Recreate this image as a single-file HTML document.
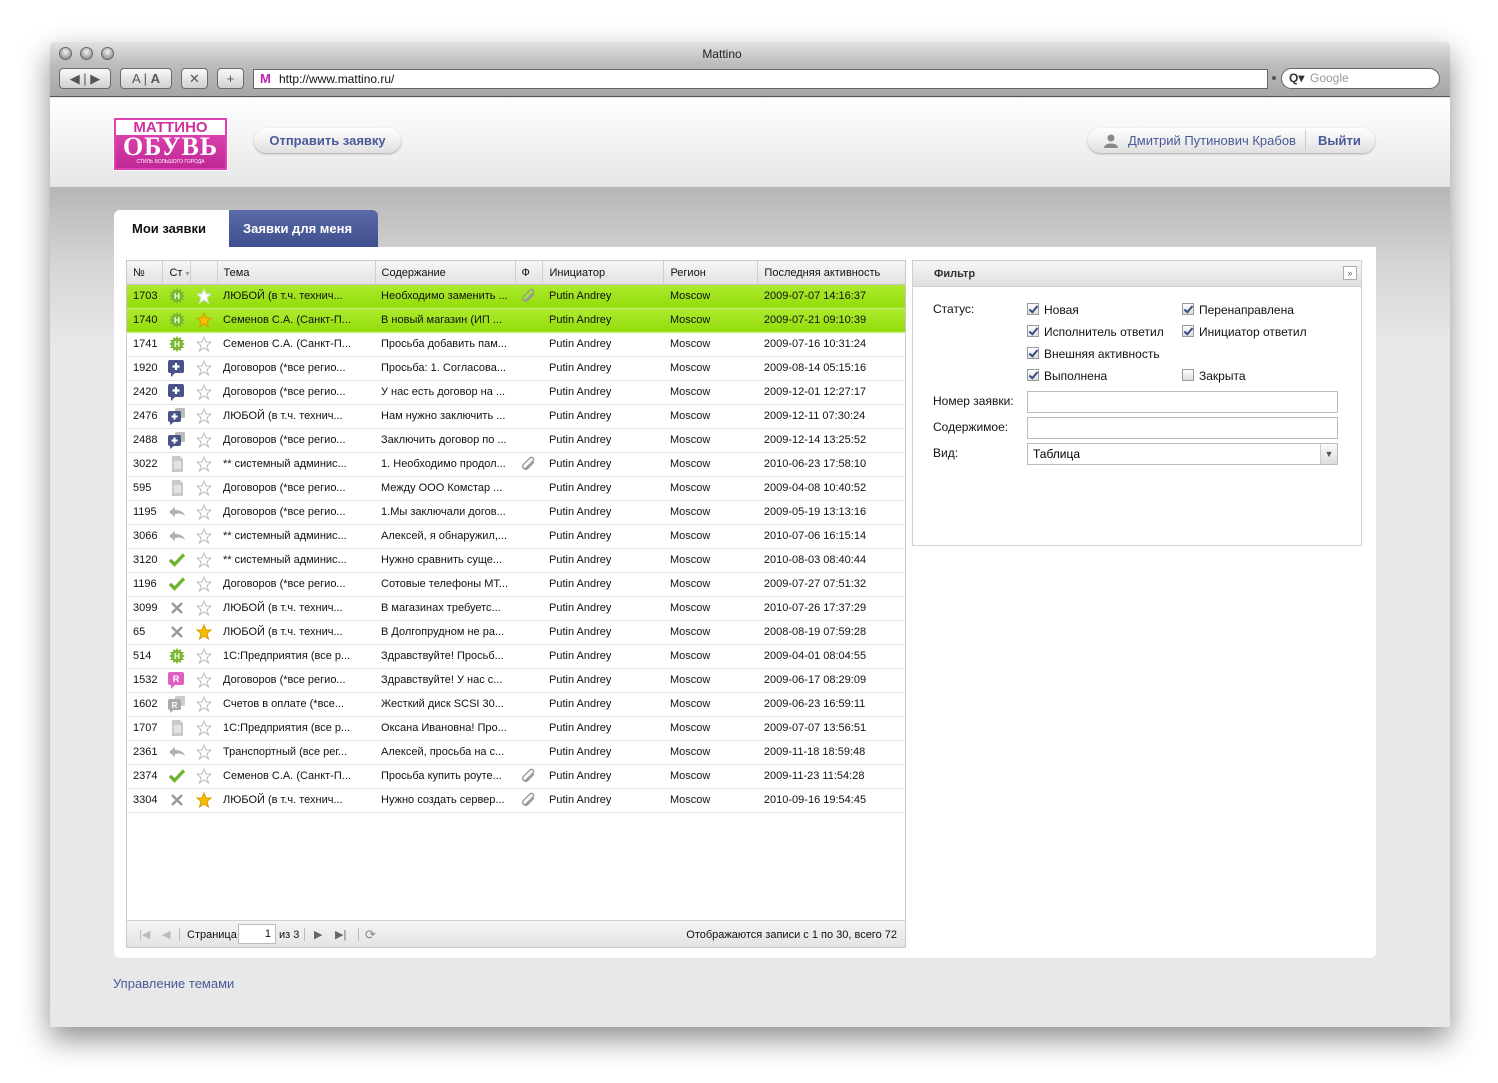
<!DOCTYPE html>
<html><head><meta charset="utf-8">
<style>
*{box-sizing:border-box;margin:0;padding:0}
body{width:1498px;height:1083px;background:#fff;font-family:"Liberation Sans",sans-serif;position:relative;overflow:hidden}
.win{position:absolute;left:50px;top:42px;width:1400px;height:985px;background:#e8e8e8;box-shadow:0 12px 30px rgba(0,0,0,.45);border-radius:5px 5px 0 0;overflow:hidden}
.title{position:absolute;left:0;top:0;width:1400px;height:55px;background:linear-gradient(#e2e2e2,#bdbdbd 40%,#a6a6a6);border-bottom:1px solid #555}
.title .t{position:absolute;left:650px;width:44px;top:5px;text-align:center;font-size:12px;color:#222}
.dot{position:absolute;top:5px;width:13px;height:13px;border-radius:50%;background:radial-gradient(circle at 50% 35%,#f4f4f4,#9a9a9a 70%,#777);border:1px solid #666}
.btn{position:absolute;top:26px;height:21px;border:1px solid #6a6a6a;border-radius:4px;background:linear-gradient(#fafafa,#d0d0d0);font-size:13px;color:#555;text-align:center;line-height:19px}
.url{position:absolute;left:203px;top:27px;width:1015px;height:20px;background:#fff;border:1px solid #666;font-size:12px;line-height:18px;padding-left:25px;color:#111}
.url b{position:absolute;left:6px;top:0;color:#c020b0;font-size:13px}
.search{position:absolute;left:1231px;top:26px;width:159px;height:21px;background:#fff;border:1px solid #666;border-radius:11px;font-size:12px;color:#999;line-height:19px;padding-left:28px}
.header{position:absolute;left:0;top:56px;width:1400px;height:89px;background:linear-gradient(#fff,#e6e6e6)}
.logo{position:absolute;left:64px;top:20px;width:113px;height:52px;background:linear-gradient(#e54cb7,#c02896);border:2px solid #e040b0;outline:1px solid #fff;color:#fff;text-align:center;overflow:hidden}
.logo .a{background:#fff;color:#d0309f;font-weight:bold;font-size:15px;line-height:15px;height:15px;letter-spacing:0}
.logo .b{font-family:"Liberation Serif",serif;font-weight:bold;font-size:26px;line-height:24px;letter-spacing:1px}
.logo .c{font-size:5px;line-height:6px}
.pill{position:absolute;height:25px;border-radius:13px;background:linear-gradient(#fff,#e0e0e0);box-shadow:0 1px 2px rgba(0,0,0,.3);color:#4a5a99;font-size:13px;font-weight:bold;line-height:25px}
.bg{position:absolute;left:0;top:145px;width:1400px;height:840px;background:linear-gradient(#b6b6b6,#d6d6d6 80px,#e8e8e8 160px)}
.tab1{position:absolute;left:64px;top:168px;width:115px;height:37px;background:#fff;border-radius:6px 0 0 0;font-weight:bold;font-size:13px;line-height:37px;padding-left:18px;color:#111}
.tab2{position:absolute;left:179px;top:168px;width:149px;height:37px;background:linear-gradient(#5a6aa8,#3f4e8c);border-radius:0 6px 0 0;color:#fff;font-weight:bold;font-size:13px;line-height:37px;padding-left:14px}
.panel{position:absolute;left:64px;top:205px;width:1262px;height:711px;background:#fff;border-radius:0 0 6px 6px}
.grid{position:absolute;left:76px;top:218px;width:780px;height:688px;border:1px solid #c8c8c8;background:#fff}
table{border-collapse:collapse;table-layout:fixed;font-size:11px;color:#111}
td,th{height:24px;padding:0 0 0 6px;white-space:nowrap;overflow:hidden;text-align:left;border-bottom:1px solid #e4e4e4}
th{font-weight:normal;height:23px;padding-top:2px;background:linear-gradient(#f6f6f6,#e2e2e2);border-right:1px solid #d0d0d0;border-bottom:1px solid #c8c8c8}
tr.g td{background:linear-gradient(#aeeb2e,#92dc0c);border-bottom-color:#c8ef80}
td.i{padding:0;text-align:center}
td svg{vertical-align:middle}
.pager{position:absolute;left:0;bottom:0;width:778px;height:27px;background:linear-gradient(#f4f4f4,#e4e4e4);border-top:1px solid #d0d0d0;font-size:11px;color:#111;line-height:28px}
.filter{position:absolute;left:862px;top:218px;width:450px;height:286px;border:1px solid #d0d0d0;background:#fff}
.fh{height:26px;background:linear-gradient(#f6f6f6,#e0e0e0);border-bottom:1px solid #d0d0d0;font-size:11px;font-weight:bold;color:#333;padding-left:21px;line-height:27px;position:relative}
.f{position:absolute;font-size:12px;color:#111}
.cb{position:absolute;width:12px;height:12px;border:1px solid #999;background:linear-gradient(#fff,#ddd)}
.cb.on::after{content:"";position:absolute;left:3px;top:0px;width:3px;height:7px;border:solid #3a4a88;border-width:0 2px 2px 0;transform:rotate(40deg)}
.inp{position:absolute;left:114px;width:311px;height:22px;border:1px solid #bbb;background:#fff}
.link{position:absolute;left:63px;top:934px;font-size:13px;color:#4a5a99}
</style></head><body>
<svg width="0" height="0" style="position:absolute">
<defs>
<g id="n"><polygon points="8,0 9.5,2.5 12,1 12,4 15,4 13.5,6.5 16,8 13.5,9.5 15,12 12,12 12,15 9.5,13.5 8,16 6.5,13.5 4,15 4,12 1,12 2.5,9.5 0,8 2.5,6.5 1,4 4,4 4,1 6.5,2.5" fill="#7cb830"/><text x="8" y="11" font-size="8" fill="#fff" text-anchor="middle" font-family="Liberation Sans" font-weight="bold">Н</text></g>
<g id="p"><rect x="0" y="0" width="16" height="13" rx="2" fill="#485488"/><polygon points="3,12 8,12 3,17" fill="#485488"/><path d="M8 3v7M4.5 6.5h7" stroke="#fff" stroke-width="2.2"/></g>
<g id="p2"><rect x="7" y="0" width="10" height="10" rx="1.5" fill="#bbb"/><rect x="0" y="3" width="13" height="11" rx="2" fill="#485488"/><polygon points="2,13 7,13 2,17" fill="#485488"/><path d="M6.5 5.5v6M3.5 8.5h6" stroke="#fff" stroke-width="2"/></g>
<g id="d"><path d="M3 0h8l3 3v13H3z" fill="#c9c9c9"/><path d="M5 6h7M5 8h7M5 10h7M5 12h7" stroke="#fff" stroke-width="1"/></g>
<g id="r"><path d="M0 8l6-5v3c5 0 9 2 10 6c-2-2-6-3-10-2v3z" fill="#b0b0b0"/></g>
<g id="c"><path d="M1 8l4.5 4.5 9.5-10" stroke="#6cb52c" stroke-width="3.4" fill="none"/></g>
<g id="x"><path d="M3 3l10 10M13 3L3 13" stroke="#999" stroke-width="2.4"/></g>
<g id="rp"><rect x="0" y="0" width="16" height="13" rx="2" fill="#e060c0"/><polygon points="3,12 8,12 3,17" fill="#e060c0"/><text x="8" y="10" font-size="9" fill="#fff" text-anchor="middle" font-family="Liberation Sans" font-weight="bold">R</text></g>
<g id="rg"><rect x="7" y="0" width="10" height="10" rx="1.5" fill="#ccc"/><rect x="0" y="3" width="13" height="11" rx="2" fill="#aaa"/><polygon points="2,13 7,13 2,17" fill="#aaa"/><text x="6.5" y="12" font-size="8" fill="#fff" text-anchor="middle" font-family="Liberation Sans" font-weight="bold">R</text></g>
<polygon id="so" points="8,1 10,6 15,6 11,9.5 12.5,15 8,11.8 3.5,15 5,9.5 1,6 6,6" fill="none" stroke="#bbb" stroke-width="1"/>
<polygon id="sy" points="8,1 10,6 15,6 11,9.5 12.5,15 8,11.8 3.5,15 5,9.5 1,6 6,6" fill="#f8c000" stroke="#d89800" stroke-width="1"/>
<polygon id="sw" points="8,1 10,6 15,6 11,9.5 12.5,15 8,11.8 3.5,15 5,9.5 1,6 6,6" fill="#fff" stroke="#ddd" stroke-width="1"/>
<g id="cl"><path d="M4 13L12 5a2 2 0 0 0-3-3L2 9a3 3 0 0 0 4 4l7-7" stroke="#999" stroke-width="1.4" fill="none"/></g>
</defs></svg>

<div class="win">
 <div class="title">
  <div class="dot" style="left:9px"></div><div class="dot" style="left:30px"></div><div class="dot" style="left:51px"></div>
  <div class="t">Mattino</div>
  <div class="btn" style="left:9px;width:52px">◀ | ▶</div>
  <div class="btn" style="left:70px;width:52px">A | <b>A</b></div>
  <div class="btn" style="left:131px;width:27px">✕</div>
  <div class="btn" style="left:167px;width:27px">+</div>
  <div class="url"><b>M</b>http://www.mattino.ru/</div>
  <div style="position:absolute;left:1222px;top:34px;width:4px;height:4px;border-radius:50%;background:#555"></div>
  <div class="search"><span style="position:absolute;left:7px;top:0;color:#333;font-weight:bold">Q▾</span>Google</div>
 </div>
 <div class="header">
  <div class="logo"><div class="a">МАТТИНО</div><div class="b">ОБУВЬ</div><div class="c">СТИЛЬ БОЛЬШОГО ГОРОДА</div></div>
  <div class="pill" style="left:204px;top:30px;width:147px;text-align:center">Отправить заявку</div>
  <div class="pill" style="left:1038px;top:30px;width:287px;font-weight:normal">
   <svg width="14" height="14" style="position:absolute;left:16px;top:6px"><circle cx="7" cy="4" r="3.5" fill="#888"/><path d="M0 14c0-6 14-6 14 0z" fill="#888"/></svg>
   <span style="position:absolute;left:40px">Дмитрий Путинович Крабов</span>
   <span style="position:absolute;left:217px;top:2px;width:1px;height:21px;background:#ccc"></span>
   <span style="position:absolute;left:230px;font-weight:bold">Выйти</span>
  </div>
 </div>
 <div class="bg"></div>
 <div class="tab1">Мои заявки</div>
 <div class="tab2">Заявки для меня</div>
 <div class="panel"></div>
 <div class="grid">
  <table>
   <colgroup><col style="width:36px"><col style="width:27px"><col style="width:27px"><col style="width:158px"><col style="width:140px"><col style="width:28px"><col style="width:121px"><col style="width:94px"><col style="width:147px"></colgroup>
   <tr><th>№</th><th>Ст <span style="color:#999;font-size:8px">▾</span></th><th></th><th>Тема</th><th>Содержание</th><th>Ф</th><th>Инициатор</th><th>Регион</th><th style="border-right:0">Последняя активность</th></tr>
   <tr class="g"><td>1703</td><td class="i"><svg width="16" height="16"><use href="#n"/></svg></td><td class="i"><svg width="16" height="16"><use href="#sw"/></svg></td><td>ЛЮБОЙ (в т.ч. технич...</td><td>Необходимо заменить ...</td><td class="i"><svg width="16" height="16"><use href="#cl"/></svg></td><td>Putin Andrey</td><td>Moscow</td><td>2009-07-07 14:16:37</td></tr>
   <tr class="g"><td>1740</td><td class="i"><svg width="16" height="16"><use href="#n"/></svg></td><td class="i"><svg width="16" height="16"><use href="#sy"/></svg></td><td>Семенов С.А. (Санкт-П...</td><td>В новый магазин (ИП ...</td><td></td><td>Putin Andrey</td><td>Moscow</td><td>2009-07-21 09:10:39</td></tr>
   <tr><td>1741</td><td class="i"><svg width="16" height="16"><use href="#n"/></svg></td><td class="i"><svg width="16" height="16"><use href="#so"/></svg></td><td>Семенов С.А. (Санкт-П...</td><td>Просьба добавить пам...</td><td></td><td>Putin Andrey</td><td>Moscow</td><td>2009-07-16 10:31:24</td></tr>
   <tr><td>1920</td><td class="i"><svg width="17" height="17"><use href="#p"/></svg></td><td class="i"><svg width="16" height="16"><use href="#so"/></svg></td><td>Договоров (*все регио...</td><td>Просьба: 1. Согласова...</td><td></td><td>Putin Andrey</td><td>Moscow</td><td>2009-08-14 05:15:16</td></tr>
   <tr><td>2420</td><td class="i"><svg width="17" height="17"><use href="#p"/></svg></td><td class="i"><svg width="16" height="16"><use href="#so"/></svg></td><td>Договоров (*все регио...</td><td>У нас есть договор на ...</td><td></td><td>Putin Andrey</td><td>Moscow</td><td>2009-12-01 12:27:17</td></tr>
   <tr><td>2476</td><td class="i"><svg width="17" height="17"><use href="#p2"/></svg></td><td class="i"><svg width="16" height="16"><use href="#so"/></svg></td><td>ЛЮБОЙ (в т.ч. технич...</td><td>Нам нужно заключить ...</td><td></td><td>Putin Andrey</td><td>Moscow</td><td>2009-12-11 07:30:24</td></tr>
   <tr><td>2488</td><td class="i"><svg width="17" height="17"><use href="#p2"/></svg></td><td class="i"><svg width="16" height="16"><use href="#so"/></svg></td><td>Договоров (*все регио...</td><td>Заключить договор по ...</td><td></td><td>Putin Andrey</td><td>Moscow</td><td>2009-12-14 13:25:52</td></tr>
   <tr><td>3022</td><td class="i"><svg width="16" height="16"><use href="#d"/></svg></td><td class="i"><svg width="16" height="16"><use href="#so"/></svg></td><td>** системный админис...</td><td>1. Необходимо продол...</td><td class="i"><svg width="16" height="16"><use href="#cl"/></svg></td><td>Putin Andrey</td><td>Moscow</td><td>2010-06-23 17:58:10</td></tr>
   <tr><td>595</td><td class="i"><svg width="16" height="16"><use href="#d"/></svg></td><td class="i"><svg width="16" height="16"><use href="#so"/></svg></td><td>Договоров (*все регио...</td><td>Между ООО Комстар ...</td><td></td><td>Putin Andrey</td><td>Moscow</td><td>2009-04-08 10:40:52</td></tr>
   <tr><td>1195</td><td class="i"><svg width="16" height="16"><use href="#r"/></svg></td><td class="i"><svg width="16" height="16"><use href="#so"/></svg></td><td>Договоров (*все регио...</td><td>1.Мы заключали догов...</td><td></td><td>Putin Andrey</td><td>Moscow</td><td>2009-05-19 13:13:16</td></tr>
   <tr><td>3066</td><td class="i"><svg width="16" height="16"><use href="#r"/></svg></td><td class="i"><svg width="16" height="16"><use href="#so"/></svg></td><td>** системный админис...</td><td>Алексей, я обнаружил,...</td><td></td><td>Putin Andrey</td><td>Moscow</td><td>2010-07-06 16:15:14</td></tr>
   <tr><td>3120</td><td class="i"><svg width="16" height="16"><use href="#c"/></svg></td><td class="i"><svg width="16" height="16"><use href="#so"/></svg></td><td>** системный админис...</td><td>Нужно сравнить суще...</td><td></td><td>Putin Andrey</td><td>Moscow</td><td>2010-08-03 08:40:44</td></tr>
   <tr><td>1196</td><td class="i"><svg width="16" height="16"><use href="#c"/></svg></td><td class="i"><svg width="16" height="16"><use href="#so"/></svg></td><td>Договоров (*все регио...</td><td>Сотовые телефоны МТ...</td><td></td><td>Putin Andrey</td><td>Moscow</td><td>2009-07-27 07:51:32</td></tr>
   <tr><td>3099</td><td class="i"><svg width="16" height="16"><use href="#x"/></svg></td><td class="i"><svg width="16" height="16"><use href="#so"/></svg></td><td>ЛЮБОЙ (в т.ч. технич...</td><td>В магазинах требуетс...</td><td></td><td>Putin Andrey</td><td>Moscow</td><td>2010-07-26 17:37:29</td></tr>
   <tr><td>65</td><td class="i"><svg width="16" height="16"><use href="#x"/></svg></td><td class="i"><svg width="16" height="16"><use href="#sy"/></svg></td><td>ЛЮБОЙ (в т.ч. технич...</td><td>В Долгопрудном не ра...</td><td></td><td>Putin Andrey</td><td>Moscow</td><td>2008-08-19 07:59:28</td></tr>
   <tr><td>514</td><td class="i"><svg width="16" height="16"><use href="#n"/></svg></td><td class="i"><svg width="16" height="16"><use href="#so"/></svg></td><td>1С:Предприятия (все р...</td><td>Здравствуйте! Просьб...</td><td></td><td>Putin Andrey</td><td>Moscow</td><td>2009-04-01 08:04:55</td></tr>
   <tr><td>1532</td><td class="i"><svg width="17" height="17"><use href="#rp"/></svg></td><td class="i"><svg width="16" height="16"><use href="#so"/></svg></td><td>Договоров (*все регио...</td><td>Здравствуйте! У нас с...</td><td></td><td>Putin Andrey</td><td>Moscow</td><td>2009-06-17 08:29:09</td></tr>
   <tr><td>1602</td><td class="i"><svg width="17" height="17"><use href="#rg"/></svg></td><td class="i"><svg width="16" height="16"><use href="#so"/></svg></td><td>Счетов в оплате (*все...</td><td>Жесткий диск SCSI 30...</td><td></td><td>Putin Andrey</td><td>Moscow</td><td>2009-06-23 16:59:11</td></tr>
   <tr><td>1707</td><td class="i"><svg width="16" height="16"><use href="#d"/></svg></td><td class="i"><svg width="16" height="16"><use href="#so"/></svg></td><td>1С:Предприятия (все р...</td><td>Оксана Ивановна! Про...</td><td></td><td>Putin Andrey</td><td>Moscow</td><td>2009-07-07 13:56:51</td></tr>
   <tr><td>2361</td><td class="i"><svg width="16" height="16"><use href="#r"/></svg></td><td class="i"><svg width="16" height="16"><use href="#so"/></svg></td><td>Транспортный (все рег...</td><td>Алексей, просьба на с...</td><td></td><td>Putin Andrey</td><td>Moscow</td><td>2009-11-18 18:59:48</td></tr>
   <tr><td>2374</td><td class="i"><svg width="16" height="16"><use href="#c"/></svg></td><td class="i"><svg width="16" height="16"><use href="#so"/></svg></td><td>Семенов С.А. (Санкт-П...</td><td>Просьба купить роуте...</td><td class="i"><svg width="16" height="16"><use href="#cl"/></svg></td><td>Putin Andrey</td><td>Moscow</td><td>2009-11-23 11:54:28</td></tr>
   <tr><td>3304</td><td class="i"><svg width="16" height="16"><use href="#x"/></svg></td><td class="i"><svg width="16" height="16"><use href="#sy"/></svg></td><td>ЛЮБОЙ (в т.ч. технич...</td><td>Нужно создать сервер...</td><td class="i"><svg width="16" height="16"><use href="#cl"/></svg></td><td>Putin Andrey</td><td>Moscow</td><td>2010-09-16 19:54:45</td></tr>
  </table>
  <div class="pager">
   <span style="position:absolute;left:12px;color:#bbb">|◀</span>
   <span style="position:absolute;left:35px;color:#bbb">◀</span>
   <span style="position:absolute;left:52px;top:7px;width:1px;height:13px;background:#bbb"></span>
   <span style="position:absolute;left:60px">Страница</span>
   <span style="position:absolute;left:111px;top:3px;width:38px;height:20px;background:#fff;border:1px solid #bbb;text-align:right;padding-right:4px;line-height:18px">1</span>
   <span style="position:absolute;left:152px">из 3</span>
   <span style="position:absolute;left:177px;top:7px;width:1px;height:13px;background:#bbb"></span>
   <span style="position:absolute;left:187px;color:#666">▶</span>
   <span style="position:absolute;left:208px;color:#666">▶|</span>
   <span style="position:absolute;left:231px;top:7px;width:1px;height:13px;background:#bbb"></span>
   <span style="position:absolute;left:238px;color:#888;font-size:13px">⟳</span>
   <span style="position:absolute;right:8px">Отображаются записи с 1 по 30, всего 72</span>
  </div>
 </div>
 <div class="filter">
  <div class="fh">Фильтр<span style="position:absolute;right:4px;top:5px;width:14px;height:14px;border:1px solid #aaa;background:#fff;font-size:9px;line-height:12px;text-align:center;font-weight:normal;color:#666">»</span></div>
  <div class="f" style="left:20px;top:41px">Статус:</div>
  <div class="cb on" style="left:114px;top:42px"></div><div class="f" style="left:131px;top:42px">Новая</div>
  <div class="cb on" style="left:269px;top:42px"></div><div class="f" style="left:286px;top:42px">Перенаправлена</div>
  <div class="cb on" style="left:114px;top:64px"></div><div class="f" style="left:131px;top:64px">Исполнитель ответил</div>
  <div class="cb on" style="left:269px;top:64px"></div><div class="f" style="left:286px;top:64px">Инициатор ответил</div>
  <div class="cb on" style="left:114px;top:86px"></div><div class="f" style="left:131px;top:86px">Внешняя активность</div>
  <div class="cb on" style="left:114px;top:108px"></div><div class="f" style="left:131px;top:108px">Выполнена</div>
  <div class="cb" style="left:269px;top:108px"></div><div class="f" style="left:286px;top:108px">Закрыта</div>
  <div class="f" style="left:20px;top:133px">Номер заявки:</div><div class="inp" style="top:130px"></div>
  <div class="f" style="left:20px;top:159px">Содержимое:</div><div class="inp" style="top:156px"></div>
  <div class="f" style="left:20px;top:185px">Вид:</div><div class="inp" style="top:182px;font-size:12px;line-height:20px;padding-left:5px">Таблица<span style="position:absolute;right:0;top:0;width:17px;height:20px;background:linear-gradient(#fafafa,#ddd);border-left:1px solid #ccc;text-align:center;font-size:9px;color:#555">▼</span></div>
 </div>
 <div class="link">Управление темами</div>
</div>
</body></html>
